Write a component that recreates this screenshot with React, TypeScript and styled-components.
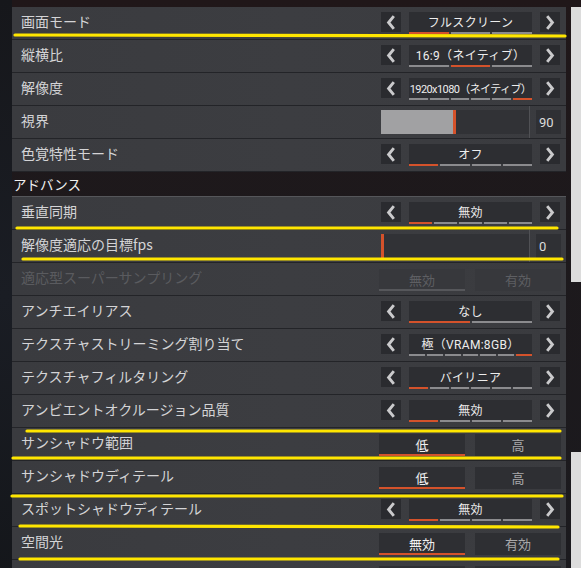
import React from "react";
import styled, { createGlobalStyle } from "styled-components";

const GlobalStyle = createGlobalStyle`
  html, body { margin: 0; padding: 0; background: #1c1719; }
  body { font-family: "Noto Sans CJK JP", "Noto Sans", sans-serif; }
`;

const Page = styled.div`
  position: relative;
  width: 581px;
  height: 568px;
  overflow: hidden;
  display: grid;
  grid-template-columns: 12px 554px 5px 10px;
  background: linear-gradient(180deg, #201719 0%, #1d191c 40%, #1b1a1e 100%);
`;

const Gutter = styled.div`
  background: linear-gradient(180deg, #16171b 0%, #1a1d24 50%, #14161a 100%);
`;

const Panel = styled.div`
  padding-top: 7px;
  display: flex;
  flex-direction: column;
`;

const Side = styled.div`
  padding-top: 7px;
  display: flex;
  flex-direction: column;
`;

const SideBlock = styled.div<{ $h?: number; $light?: boolean }>`
  flex: ${(p) => (p.$h ? "0 0 auto" : "1 1 auto")};
  height: ${(p) => (p.$h ? `${p.$h}px` : "auto")};
  background: ${(p) => (p.$light ? "#dcdcdc" : "transparent")};
`;

const Row = styled.div`
  height: 32px;
  flex-shrink: 0;
  border-bottom: 1px solid #232428;
  background: linear-gradient(90deg, #3a3b3f 0%, #3c3d41 50%, #3a3b3f 100%);
  display: flex;
  align-items: center;
  justify-content: space-between;
  padding: 0 5px 0 9px;
`;

const Label = styled.span<{ $disabled?: boolean }>`
  font-size: 14px;
  line-height: 1;
  margin-top: -4px;
  white-space: nowrap;
  color: ${(p) => (p.$disabled ? "#5a5b5f" : "#d4d4d6")};
`;

const SectionHeader = styled.div`
  height: 25px;
  flex-shrink: 0;
  display: flex;
  align-items: center;
  padding-left: 1px;
  color: #f0f0f0;
  font-size: 13.5px;
  font-weight: 400;
  border-bottom: 1px solid #55565a;
  box-sizing: border-box;
`;

const Spinner = styled.div`
  display: flex;
  gap: 8px;
  align-self: flex-start;
  margin-top: 5px;
  margin-right: 1px;
`;

const ArrowBtn = styled.div`
  width: 20px;
  height: 20px;
  background: #2a2b2f;
  display: flex;
  align-items: center;
  justify-content: center;
`;

const ValueCol = styled.div`
  width: 123px;
  display: flex;
  flex-direction: column;
`;

const ValueBox = styled.div<{ $compact?: boolean }>`
  height: 20px;
  background: #2d2e32;
  color: #ededed;
  font-family: Roboto, "Noto Sans CJK JP", sans-serif;
  font-size: ${(p) => (p.$compact ? "11px" : "12px")};
  letter-spacing: ${(p) => (p.$compact ? "-0.6px" : "0.3px")};
  display: flex;
  align-items: center;
  justify-content: center;
  white-space: nowrap;
  padding-bottom: 1px;
  box-sizing: border-box;
`;

const Segments = styled.div`
  display: flex;
  gap: 2px;
  height: 2px;
`;

const Segment = styled.div<{ $on: boolean }>`
  flex: 1;
  background: ${(p) => (p.$on ? "#d4522b" : "#8b8b8e")};
`;

const SliderWrap = styled.div`
  display: flex;
  align-self: stretch;
  align-items: center;
`;

const Track = styled.div`
  width: 148px;
  height: 24px;
  background: #313236;
  display: flex;
`;

const Fill = styled.div`
  height: 100%;
  background: #a1a1a3;
  border-right: 3px solid #d4522b;
`;

const Divider = styled.div`
  width: 1px;
  align-self: stretch;
  background: #505155;
  margin-right: 6px;
`;

const SliderValue = styled.div`
  width: 25px;
  height: 24px;
  background: #2f3034;
  color: #dcdcdc;
  font-family: Roboto, "Noto Sans", sans-serif;
  font-size: 13px;
  display: flex;
  align-items: center;
  padding-left: 3px;
  box-sizing: border-box;
`;

const ToggleGroup = styled.div`
  display: flex;
  gap: 10px;
  align-self: flex-start;
  margin-top: 6px;
`;

const ToggleBtn = styled.div<{ $selected?: boolean; $disabled?: boolean }>`
  width: 86px;
  height: 22px;
  box-sizing: border-box;
  background: ${(p) => (p.$disabled ? "#37383c" : "#2e2f33")};
  border-bottom: 2px solid
    ${(p) =>
      p.$selected ? (p.$disabled ? "#56575b" : "#d4522b") : "transparent"};
  color: ${(p) =>
    p.$disabled ? "#5e5f63" : p.$selected ? "#f0f0f0" : "#a9a9ab"};
  font-size: 13px;
  display: flex;
  align-items: center;
  justify-content: center;
`;

const Overlay = styled.svg`
  position: absolute;
  left: 0;
  top: 0;
  pointer-events: none;
`;

const Chevron = ({ dir }: { dir: "left" | "right" }) => (
  <svg width="10" height="15" viewBox="0 0 10 15">
    <path
      d={dir === "left" ? "M7.8 1.2 L2.6 7.5 L7.8 13.8" : "M2.2 1.2 L7.4 7.5 L2.2 13.8"}
      fill="none"
      stroke="#cacacc"
      strokeWidth="2.9"
    />
  </svg>
);

type Setting =
  | { kind: "spin"; label: string; value: string; segs: number; on: number; compact?: boolean }
  | { kind: "slider"; label: string; fill: number; value: string }
  | { kind: "toggle"; label: string; options: string[]; selected: number; disabled?: boolean };

const basic: Setting[] = [
  { kind: "spin", label: "画面モード", value: "フルスクリーン", segs: 3, on: 0 },
  { kind: "spin", label: "縦横比", value: "16:9（ネイティブ）", segs: 3, on: 1 },
  { kind: "spin", label: "解像度", value: "1920x1080（ネイティブ）", segs: 6, on: 5, compact: true },
  { kind: "slider", label: "視界", fill: 72, value: "90" },
  { kind: "spin", label: "色覚特性モード", value: "オフ", segs: 4, on: 0 },
];

const advanced: Setting[] = [
  { kind: "spin", label: "垂直同期", value: "無効", segs: 5, on: 0 },
  { kind: "slider", label: "解像度適応の目標fps", fill: 0, value: "0" },
  { kind: "toggle", label: "適応型スーパーサンプリング", options: ["無効", "有効"], selected: 0, disabled: true },
  { kind: "spin", label: "アンチエイリアス", value: "なし", segs: 2, on: 0 },
  { kind: "spin", label: "テクスチャストリーミング割り当て", value: "極（VRAM:8GB）", segs: 7, on: 6 },
  { kind: "spin", label: "テクスチャフィルタリング", value: "バイリニア", segs: 6, on: 0 },
  { kind: "spin", label: "アンビエントオクルージョン品質", value: "無効", segs: 4, on: 0 },
  { kind: "toggle", label: "サンシャドウ範囲", options: ["低", "高"], selected: 0 },
  { kind: "toggle", label: "サンシャドウディテール", options: ["低", "高"], selected: 0 },
  { kind: "spin", label: "スポットシャドウディテール", value: "無効", segs: 4, on: 0 },
  { kind: "toggle", label: "空間光", options: ["無効", "有効"], selected: 0 },
  { kind: "toggle", label: "", options: ["", ""], selected: -1 },
];

const SettingRow = ({ s }: { s: Setting }) => {
  const disabled = s.kind === "toggle" && s.disabled;
  return (
    <Row>
      <Label $disabled={disabled}>{s.label}</Label>
      {s.kind === "spin" && (
        <Spinner>
          <ArrowBtn>
            <Chevron dir="left" />
          </ArrowBtn>
          <ValueCol>
            <ValueBox $compact={s.compact}>{s.value}</ValueBox>
            <Segments>
              {Array.from({ length: s.segs }).map((_, i) => (
                <Segment key={i} $on={i === s.on} />
              ))}
            </Segments>
          </ValueCol>
          <ArrowBtn>
            <Chevron dir="right" />
          </ArrowBtn>
        </Spinner>
      )}
      {s.kind === "slider" && (
        <SliderWrap>
          <Track>
            <Fill style={{ width: `${s.fill}px` }} />
          </Track>
          <Divider />
          <SliderValue>{s.value}</SliderValue>
        </SliderWrap>
      )}
      {s.kind === "toggle" && (
        <ToggleGroup>
          {s.options.map((o, i) => (
            <ToggleBtn key={i} $selected={i === s.selected} $disabled={s.disabled}>
              {o}
            </ToggleBtn>
          ))}
        </ToggleGroup>
      )}
    </Row>
  );
};

const marks: [number, number, number, number][] = [
  [15, 35, 565, 36],
  [17, 228, 557, 228],
  [23, 259, 562, 259],
  [27, 431, 560, 431],
  [13, 458, 560, 458],
  [12, 496, 562, 496],
  [20, 526, 558, 527],
  [20, 559, 558, 559],
];

export default function App() {
  return (
    <>
      <GlobalStyle />
      <Page>
        <Gutter />
        <Panel>
          {basic.map((s, i) => (
            <SettingRow key={i} s={s} />
          ))}
          <SectionHeader>アドバンス</SectionHeader>
          {advanced.map((s, i) => (
            <SettingRow key={i} s={s} />
          ))}
        </Panel>
        <div />
        <Side>
          <SideBlock $h={275} $light />
          <SideBlock $h={170} />
          <SideBlock $light />
        </Side>
        <Overlay width="581" height="568" viewBox="0 0 581 568">
          {marks.map(([x1, y1, x2, y2], i) => (
            <line
              key={i}
              x1={x1}
              y1={y1}
              x2={x2}
              y2={y2}
              stroke="#ffe600"
              strokeWidth="3.2"
              strokeLinecap="round"
            />
          ))}
        </Overlay>
      </Page>
    </>
  );
}
